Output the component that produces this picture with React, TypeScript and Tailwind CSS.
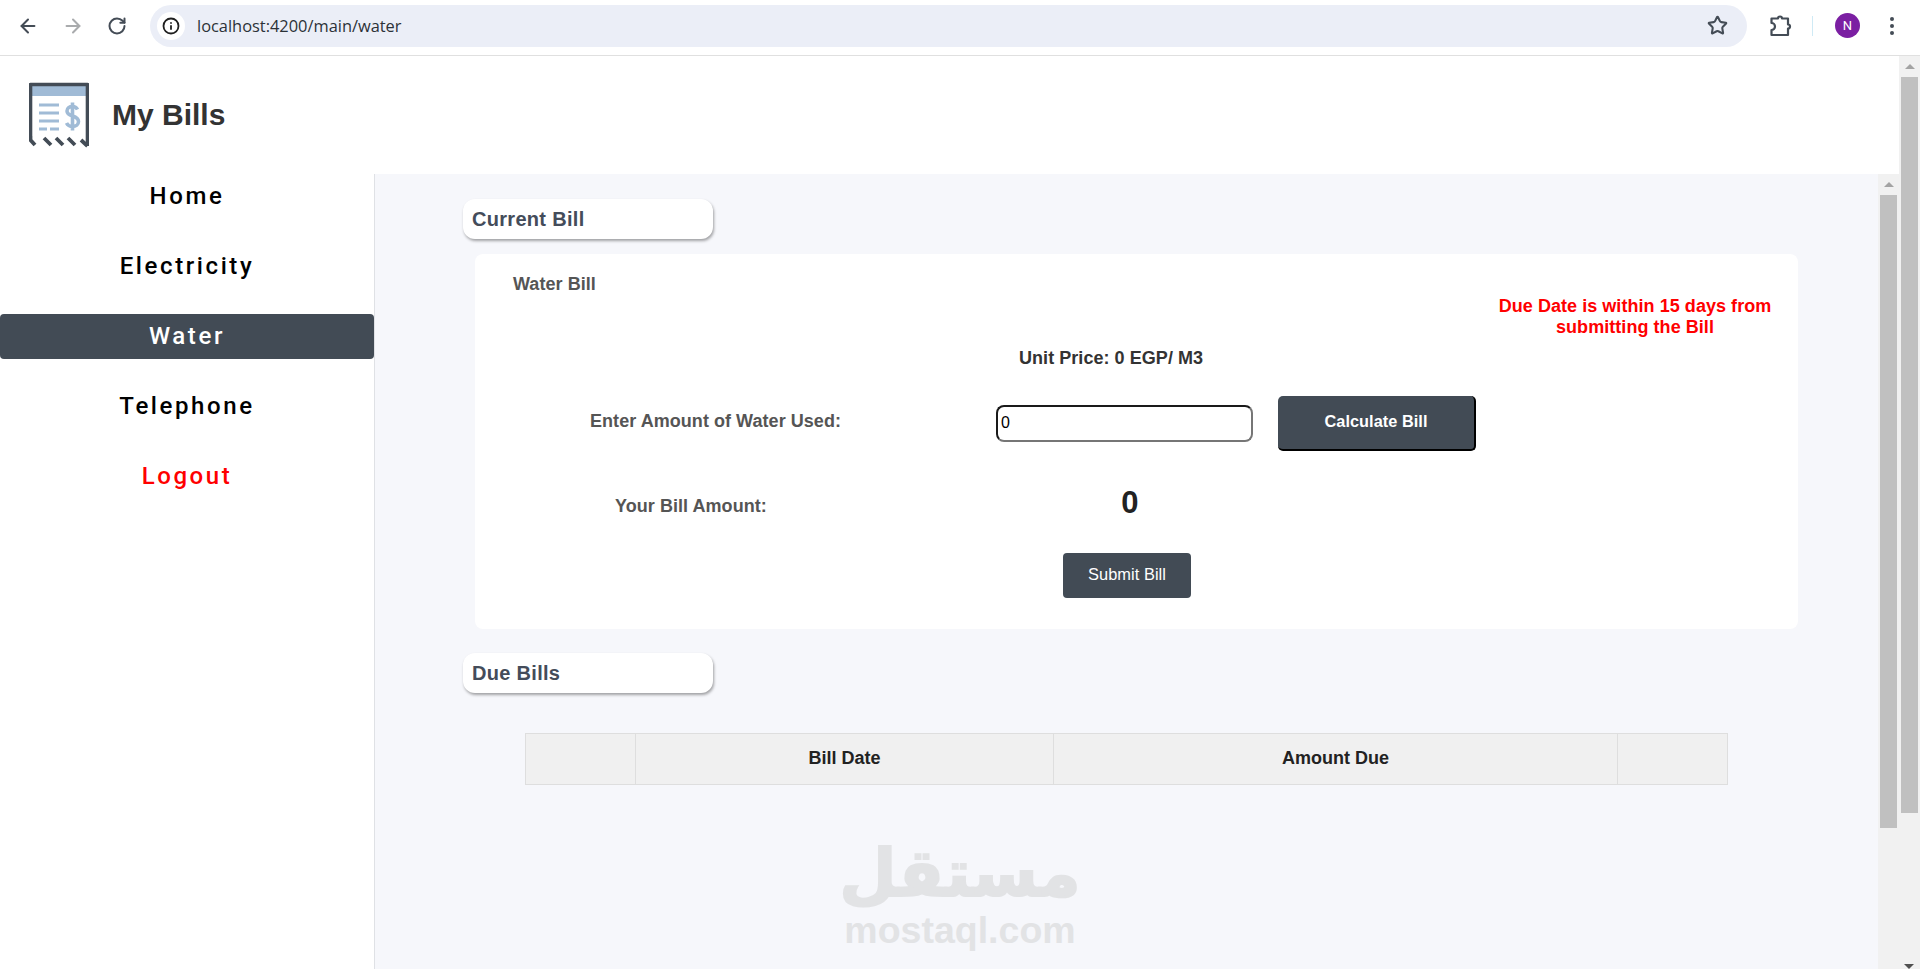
import { ArrowLeft, ArrowRight, Info, RotateCw, Star } from 'lucide-react';

const navItems = ['Home', 'Electricity', 'Water', 'Telephone', 'Logout'];

function BrowserBar() {
  return (
    <div className="h-[56px] shrink-0 bg-white border-b border-[#e0e0e0] flex items-center pb-[4px] text-[#444c56]">
      <div className="w-[150px] shrink-0 flex items-center pl-[17px] gap-[23px]">
        <ArrowLeft size={22} strokeWidth={2.2} />
        <ArrowRight size={22} strokeWidth={2.2} className="text-[#a9abad]" />
        <RotateCw size={20} strokeWidth={2.4} />
      </div>
      <div className="w-[1597px] h-[42px] rounded-full bg-[#ebeef7] flex items-center pl-[7px] pr-[19px]">
        <div className="w-[28px] h-[28px] rounded-full bg-white flex items-center justify-center text-[#1f1f1f]">
          <Info size={18} strokeWidth={2.4} />
        </div>
        <span className="ml-[12px] pt-[1px] text-[16.4px] text-[#2c3238] font-['Open_Sans',sans-serif]">localhost:4200/main/water</span>
        <Star size={21} strokeWidth={2.4} className="ml-auto" />
      </div>
      <svg width="24" height="24" viewBox="0 0 24 24" fill="none" stroke="#444c56" strokeWidth="2.200" strokeLinejoin="round" className="ml-[21px]">
        <path d="M3.500 4.500h6.500a2 2 0 0 1 4 0h6v6a2 2 0 0 1 0 4v6.500H3.500v-5a3.500 3.500 0 0 0 0-7z" />
      </svg>
      <div className="ml-[20px] w-[1px] h-[20px] bg-[#cfeaf5]" />
      <div className="ml-[22px] w-[25px] h-[25px] rounded-full bg-[#7b1fa2] text-white text-[13px] flex items-center justify-center font-['Roboto',sans-serif]">N</div>
      <div className="ml-[30px] flex flex-col gap-[3px]">
        <span className="w-[4px] h-[4px] rounded-full bg-[#444c56]" />
        <span className="w-[4px] h-[4px] rounded-full bg-[#444c56]" />
        <span className="w-[4px] h-[4px] rounded-full bg-[#444c56]" />
      </div>
    </div>
  );
}

function BillsLogo() {
  return (
    <svg width="60" height="66" viewBox="0 0 60 66" fill="none">
      <rect x="3" y="4" width="54" height="10" fill="#a0bbd6" />
      <path d="M1.500 54V2.500H58.500V64" stroke="#434c56" strokeWidth="3.600" strokeLinejoin="round" />
      <path d="M1.500 54V58L6 63M15 56L22 63M27 56L34 63M39 56L46 63M52 58L58.500 64" stroke="#434c56" strokeWidth="3.800" />
      <path d="M10 23H30M10 31H30M10 39H30" stroke="#a0bbd6" strokeWidth="3" />
      <path d="M10 47H18M21 47H30" stroke="#a0bbd6" strokeWidth="3" />
      <path d="M48.500 27.500C47.500 25.500 46 24.500 43.500 24.500C40.500 24.500 38 26 38 29C38 35.500 49.500 32.500 49.500 39.500C49.500 42.500 47 44.500 43.500 44.500C40.500 44.500 38.500 43 37.500 41M43.500 20.500V48.500" stroke="#a0bbd6" strokeWidth="3.600" />
    </svg>
  );
}

function Sidebar() {
  return (
    <aside className="w-[375px] shrink-0 border-r border-[#dfe1e5] bg-white flex flex-col font-['Roboto',sans-serif] text-[24px] font-medium tracking-[2.6px]">
      {navItems.map((item) => (
        <div
          key={item}
          className={
            'w-[374px] h-[45px] flex items-center justify-center rounded-[4px] mb-[25px] pb-[1px] ' +
            (item === 'Water' ? 'bg-[#424b55] text-white' : item === 'Logout' ? 'text-[#ff0000]' : 'text-black')
          }
        >
          {item}
        </div>
      ))}
    </aside>
  );
}

function SectionTab({ title, className }: { title: string; className: string }) {
  return (
    <div className={'w-[250px] h-[40px] bg-white rounded-[12px] shadow-[1px_2px_3px_rgba(0,0,0,0.35)] flex items-center pl-[9px] pb-[1px] text-[20px] tracking-[0.3px] font-bold text-[#444c5a] ' + className}>
      {title}
    </div>
  );
}

function CurrentBill() {
  return (
    <div className="ml-[12px] mt-[15px] w-[1323px] h-[375px] bg-white rounded-[8px] flex flex-col tracking-[0.05px]">
      <div className="h-[92px] flex justify-between items-start">
        <div className="ml-[38px] mt-[20px] text-[18px] leading-[21px] font-bold text-[#555555]">Water Bill</div>
        <div className="w-[300px] mr-[13px] mt-[42px] text-center text-[18px] leading-[21px] font-bold text-[#ff0000]">
          Due Date is within 15 days from submitting the Bill
        </div>
      </div>
      <div className="h-[24px] ml-[544px] flex items-center text-[18px] font-bold text-[#333333]">Unit Price: 0 EGP/ M3</div>
      <div className="mt-[26px] h-[55px] flex items-center">
        <div className="w-[521px] pl-[115px] pb-[4px] text-[18px] font-bold text-[#555555]">Enter Amount of Water Used:</div>
        <input
          readOnly
          value="0"
          className="w-[257px] h-[37px] rounded-[8px] border-2 border-t-[#1a1a1a] border-l-[#1a1a1a] border-r-[#767676] border-b-[#767676] px-[3px] pb-[2px] text-[16px] text-black bg-white outline-none"
        />
        <button className="ml-[25px] w-[198px] h-[55px] rounded-[5px] bg-[#424b55] border-r-2 border-b-2 border-black pb-[2px] text-white text-[16.300px] font-bold">
          Calculate Bill
        </button>
      </div>
      <div className="mt-[29px] h-[50px] flex items-center">
        <div className="w-[521px] pl-[140px] pt-[3px] text-[18px] font-bold text-[#555555]">Your Bill Amount:</div>
        <div className="w-[268px] pb-[4px] text-center text-[31px] font-bold text-[#222222]">0</div>
      </div>
      <button className="ml-[588px] mt-[23px] w-[128px] h-[45px] rounded-[4px] bg-[#424b55] pb-[2px] text-white text-[16.400px]">Submit Bill</button>
    </div>
  );
}

function DueTable() {
  return (
    <table className="ml-[62px] mt-[40px] w-[1203px] h-[52px] border-collapse table-fixed bg-[#f0f0f0] text-[18px] text-[#222222]">
      <thead>
        <tr>
          <th className="w-[110px] border border-[#dedede]" />
          <th className="w-[418px] border border-[#dedede] pb-[2px] font-bold">Bill Date</th>
          <th className="w-[564px] border border-[#dedede] pb-[2px] font-bold">Amount Due</th>
          <th className="border border-[#dedede]" />
        </tr>
      </thead>
    </table>
  );
}

function ScrollBar({ thumbHeight }: { thumbHeight: number }) {
  return (
    <div className="w-[21px] shrink-0 bg-[#f1f1f1] flex flex-col items-center">
      <div className="h-[21px] flex items-center justify-center">
        <div className="w-0 h-0 border-x-[5px] border-x-transparent border-b-[5px] border-b-[#a3a3a3]" />
      </div>
      <div className="w-[17px] bg-[#c0c0c0]" style={{ height: thumbHeight }} />
    </div>
  );
}

export default function App() {
  return (
    <div className="w-[1920px] h-[969px] overflow-hidden relative flex flex-col bg-white font-['Liberation_Sans',Arial,sans-serif]">
      <BrowserBar />
      <div className="flex flex-1 min-h-0">
        <div className="flex-1 flex flex-col min-w-0">
          <header className="h-[118px] shrink-0 flex items-center pl-[29px] pb-[1px]">
            <BillsLogo />
            <h1 className="ml-[23px] text-[30px] font-bold text-[#333333]">My Bills</h1>
          </header>
          <div className="flex flex-1 min-h-0">
            <Sidebar />
            <main className="flex-1 bg-[#f6f7fb] pl-[88px] pt-[25px]">
              <SectionTab title="Current Bill" className="" />
              <CurrentBill />
              <SectionTab title="Due Bills" className="mt-[24px]" />
              <DueTable />
            </main>
            <ScrollBar thumbHeight={633} />
          </div>
        </div>
        <ScrollBar thumbHeight={736} />
      </div>
      <div className="absolute left-[845px] top-[836px] w-[230px] flex flex-col items-center text-[#e2e3e5] font-bold">
        <span className="text-[66px] leading-[76px] font-['DejaVu_Sans',sans-serif] [-webkit-text-stroke:2px_#e2e3e5]">مستقل</span>
        <span className="text-[37.500px] leading-[36px]">mostaql.com</span>
      </div>
      <div className="absolute left-[1904px] top-[964px] w-0 h-0 border-x-[5px] border-x-transparent border-t-[5px] border-t-[#505050]" />
    </div>
  );
}
